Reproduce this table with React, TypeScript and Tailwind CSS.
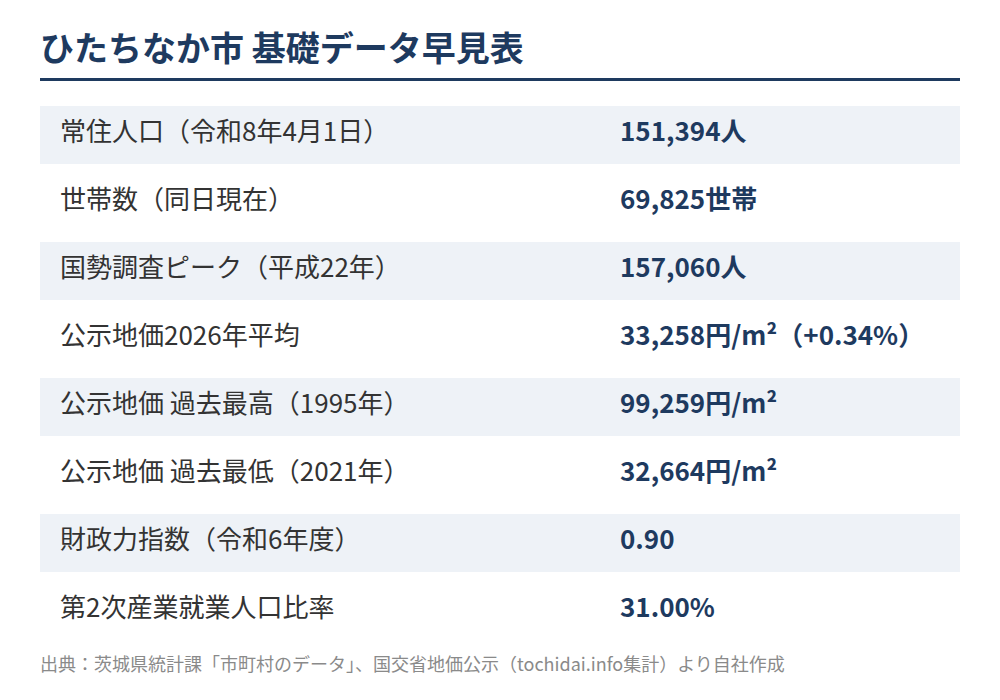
const rows: { label: string; value: string }[] = [
  { label: '常住人口（令和8年4月1日）', value: '151,394人' },
  { label: '世帯数（同日現在）', value: '69,825世帯' },
  { label: '国勢調査ピーク（平成22年）', value: '157,060人' },
  { label: '公示地価2026年平均', value: '33,258円/m²（+0.34%）' },
  { label: '公示地価 過去最高（1995年）', value: '99,259円/m²' },
  { label: '公示地価 過去最低（2021年）', value: '32,664円/m²' },
  { label: '財政力指数（令和6年度）', value: '0.90' },
  { label: '第2次産業就業人口比率', value: '31.00%' },
];

export default function App() {
  return (
    <div className="h-[700px] w-[1000px] bg-white px-10 pt-[21px] font-['Noto_Sans_CJK_JP',sans-serif]">
      <h1 className="border-b-[3px] border-[#1e3a5f] pb-[6px] text-[34px] font-bold leading-[1.5] text-[#1e3a5f]">
        ひたちなか市 基礎データ早見表
      </h1>

      <div className="mt-[25px] flex flex-col gap-[10px]">
        {rows.map((row, i) => (
          <div
            key={row.label}
            className={`grid h-[58px] grid-cols-[560px_1fr] items-center pb-[12px] ${i % 2 === 0 ? 'bg-[#eef2f7]' : 'bg-white'}`}
          >
            <div className="pl-5 text-[26px] leading-[1.5] text-[#333333]">{row.label}</div>
            <div className="pl-5 text-[26px] font-bold leading-[1.5] text-[#1e3a5f]">{row.value}</div>
          </div>
        ))}
      </div>

      <p className="mt-[10px] text-[18px] text-[#8a8a8a]">
        出典：茨城県統計課「市町村のデータ」、国交省地価公示（tochidai.info集計）より自社作成
      </p>
    </div>
  );
}
